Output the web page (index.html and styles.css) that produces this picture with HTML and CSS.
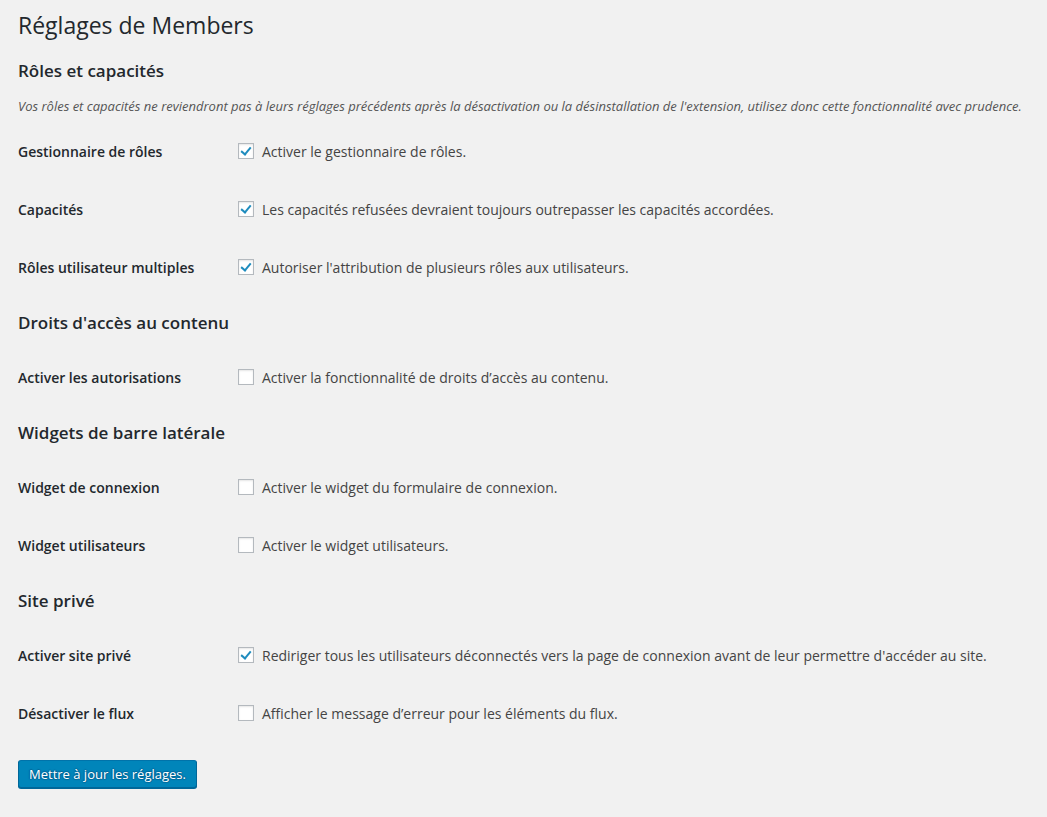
FILE: index.html
```html
<!DOCTYPE html>
<html lang="fr">
<head>
<meta charset="utf-8">
<title>Réglages de Members</title>
<link rel="stylesheet" href="styles.css">
</head>
<body>
<div class="wrap">
  <h1 class="title">Réglages de Members</h1>

  <h2 class="section">Rôles et capacités</h2>
  <p class="desc">Vos rôles et capacités ne reviendront pas à leurs réglages précédents après la désactivation ou la désinstallation de l'extension, utilisez donc cette fonctionnalité avec prudence.</p>
  <div class="rows">
    <div class="row"><div class="label">Gestionnaire de rôles</div><div class="field"><span class="cb checked"></span><span>Activer le gestionnaire de rôles.</span></div></div>
    <div class="row"><div class="label">Capacités</div><div class="field"><span class="cb checked"></span><span>Les capacités refusées devraient toujours outrepasser les capacités accordées.</span></div></div>
    <div class="row"><div class="label">Rôles utilisateur multiples</div><div class="field"><span class="cb checked"></span><span>Autoriser l'attribution de plusieurs rôles aux utilisateurs.</span></div></div>
  </div>

  <h2 class="section">Droits d'accès au contenu</h2>
  <div class="rows">
    <div class="row"><div class="label">Activer les autorisations</div><div class="field"><span class="cb"></span><span>Activer la fonctionnalité de droits d’accès au contenu.</span></div></div>
  </div>

  <h2 class="section">Widgets de barre latérale</h2>
  <div class="rows">
    <div class="row"><div class="label">Widget de connexion</div><div class="field"><span class="cb"></span><span>Activer le widget du formulaire de connexion.</span></div></div>
    <div class="row"><div class="label">Widget utilisateurs</div><div class="field"><span class="cb"></span><span>Activer le widget utilisateurs.</span></div></div>
  </div>

  <h2 class="section">Site privé</h2>
  <div class="rows">
    <div class="row"><div class="label">Activer site privé</div><div class="field"><span class="cb checked"></span><span>Rediriger tous les utilisateurs déconnectés vers la page de connexion avant de leur permettre d'accéder au site.</span></div></div>
    <div class="row"><div class="label">Désactiver le flux</div><div class="field"><span class="cb"></span><span>Afficher le message d’erreur pour les éléments du flux.</span></div></div>
  </div>

  <div class="submit"><button class="btn" type="button">Mettre à jour les réglages.</button></div>
</div>
</body>
</html>
```

FILE: styles.css
```css
html, body {
  margin: 0;
  padding: 0;
  background: #f1f1f1;
}
body {
  font-family: "Open Sans", "Liberation Sans", sans-serif;
  font-size: 14px;
  color: #444;
  width: 1047px;
  height: 817px;
  overflow: hidden;
}
.wrap {
  padding: 0 18px;
}
.title {
  margin: 0;
  padding: 11px 0 4px;
  font-size: 23px;
  font-weight: 400;
  line-height: 29px;
  color: #23282d;
}
.section {
  margin: 15px 0 0;
  font-size: 17px;
  font-weight: 600;
  line-height: 24px;
  color: #23282d;
}
.desc {
  margin: 13px 0 0;
  font-size: 13px;
  font-style: italic;
  line-height: 20px;
  color: #555;
}
.rows {
  display: flex;
  flex-direction: column;
  margin-top: 13px;
}
.desc + .rows {
  margin-top: 6px;
}
.row {
  display: flex;
  align-items: center;
  height: 58px;
}
.label {
  width: 220px;
  font-size: 14px;
  font-weight: 600;
  color: #23282d;
}
.field {
  display: flex;
  align-items: center;
  gap: 8px;
  font-size: 14px;
  color: #444;
}
.cb {
  box-sizing: border-box;
  width: 16px;
  height: 16px;
  border: 1px solid #b4b9be;
  background: #fff;
  box-shadow: inset 0 1px 2px rgba(0,0,0,0.1);
  position: relative;
  flex: none;
}
.cb.checked::after {
  content: "";
  position: absolute;
  left: 4px;
  top: 1px;
  width: 4px;
  height: 8px;
  border-right: 2px solid #1e8cbe;
  border-bottom: 2px solid #1e8cbe;
  transform: rotate(40deg);
}
.submit {
  margin-top: 18px;
}
.btn {
  box-sizing: border-box;
  height: 28px;
  padding: 0 10px 1px;
  font-family: "Open Sans", "Liberation Sans", sans-serif;
  font-size: 13px;
  line-height: 26px;
  color: #fff;
  background: #0085ba;
  border: 1px solid #0073aa;
  border-color: #0073aa #006799 #006799;
  border-radius: 3px;
  box-shadow: 0 1px 0 #006799;
  text-shadow: 0 -1px 1px #006799, 1px 0 1px #006799, 0 1px 1px #006799, -1px 0 1px #006799;
  cursor: pointer;
}
```
